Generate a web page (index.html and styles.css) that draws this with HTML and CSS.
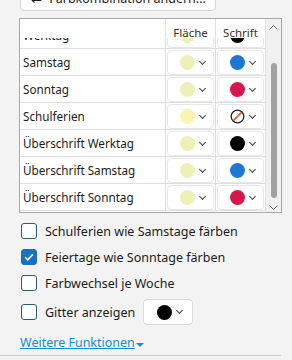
FILE: index.html
```html
<!DOCTYPE html>
<html lang="de">
<head>
    <meta charset="UTF-8">
    <title>Farben</title>
    <link rel="stylesheet" href="styles.css">
</head>
<body>

    <div class="top-btn"><span class="swap">⇄</span> Farbkombination ändern...</div>

    <!-- Farbtabelle -->
    <div class="table">
        <div class="grid-wrap">
            <div class="head">
                <div class="hcell"></div>
                <div class="hcell">Fläche</div>
                <div class="hcell">Schrift</div>
            </div>
            <div class="rows">
                <div class="row">
                    <div class="label">Werktag</div>
                    <div class="cell"><div class="pick"><span class="dot" style="background:#efefb8"></span><span class="chev"></span></div></div>
                    <div class="cell"><div class="pick"><span class="dot" style="background:#000"></span><span class="chev"></span></div></div>
                </div>
                <div class="row">
                    <div class="label">Samstag</div>
                    <div class="cell"><div class="pick"><span class="dot" style="background:#efefb8"></span><span class="chev"></span></div></div>
                    <div class="cell"><div class="pick"><span class="dot" style="background:#1f77d4"></span><span class="chev"></span></div></div>
                </div>
                <div class="row">
                    <div class="label">Sonntag</div>
                    <div class="cell"><div class="pick"><span class="dot" style="background:#efefb8"></span><span class="chev"></span></div></div>
                    <div class="cell"><div class="pick"><span class="dot" style="background:#d5174b"></span><span class="chev"></span></div></div>
                </div>
                <div class="row">
                    <div class="label">Schulferien</div>
                    <div class="cell"><div class="pick"><span class="dot" style="background:#fcf4b0"></span><span class="chev"></span></div></div>
                    <div class="cell"><div class="pick">
                        <svg class="none" width="15" height="15" viewBox="0 0 15 15">
                            <circle cx="7.5" cy="7.5" r="6.3" fill="#fff" stroke="#222" stroke-width="1.3"/>
                            <line x1="11.6" y1="3.4" x2="3.4" y2="11.6" stroke="#e0603a" stroke-width="1.8"/>
                        </svg><span class="chev"></span></div></div>
                </div>
                <div class="row">
                    <div class="label">Überschrift Werktag</div>
                    <div class="cell"><div class="pick"><span class="dot" style="background:#efefb8"></span><span class="chev"></span></div></div>
                    <div class="cell"><div class="pick"><span class="dot" style="background:#000"></span><span class="chev"></span></div></div>
                </div>
                <div class="row">
                    <div class="label">Überschrift Samstag</div>
                    <div class="cell"><div class="pick"><span class="dot" style="background:#efefb8"></span><span class="chev"></span></div></div>
                    <div class="cell"><div class="pick"><span class="dot" style="background:#1f77d4"></span><span class="chev"></span></div></div>
                </div>
                <div class="row">
                    <div class="label">Überschrift Sonntag</div>
                    <div class="cell"><div class="pick"><span class="dot" style="background:#efefb8"></span><span class="chev"></span></div></div>
                    <div class="cell"><div class="pick"><span class="dot" style="background:#d5174b"></span><span class="chev"></span></div></div>
                </div>
            </div>
        </div>
        <div class="scrollbar">
            <svg width="15" height="10" viewBox="0 0 15 10"><path d="M3.5 6.5 L7.5 2.5 L11.5 6.5" fill="none" stroke="#777" stroke-width="1"/></svg>
            <div class="track"><div class="thumb"></div></div>
            <svg width="15" height="10" viewBox="0 0 15 10"><path d="M3.5 3.5 L7.5 7.5 L11.5 3.5" fill="none" stroke="#777" stroke-width="1"/></svg>
        </div>
    </div>

    <!-- Optionen -->
    <div class="options">
        <label class="opt"><span class="box"></span>Schulferien wie Samstage färben</label>
        <label class="opt"><span class="box checked">
            <svg width="12" height="12" viewBox="0 0 12 12"><path d="M2.2 6.2 L4.8 8.8 L9.8 3.4" fill="none" stroke="#fff" stroke-width="1.6"/></svg>
        </span>Feiertage wie Sonntage färben</label>
        <label class="opt"><span class="box"></span>Farbwechsel je Woche</label>
        <div class="opt grid-opt">
            <span class="box"></span>Gitter anzeigen
            <div class="pick small"><span class="dot" style="background:#000"></span><span class="chev"></span></div>
        </div>
    </div>

    <a class="more" href="#">Weitere Funktionen</a><span class="tri"></span>

    <div class="bottom-line"></div>

</body>
</html>
```

FILE: styles.css
```css
* { margin: 0; padding: 0; box-sizing: border-box; }
body { background: #f3f3f3; font-family: "Noto Sans", "Open Sans", sans-serif; font-size: 12.5px; color: #1b1b1b; width: 292px; height: 360px; overflow: hidden; }

/* Button oben, abgeschnitten */
.top-btn {
    width: 196px;
    height: 24px;
    margin: -13px 0 0 20px;
    background: #fdfdfd;
    border: 1px solid #d6d6d6;
    border-radius: 4px;
    padding: 2px 0 0 10px;
    white-space: nowrap;
}
.top-btn .swap { margin-right: 4px; }

/* Tabelle */
.table {
    display: flex;
    width: 263px;
    height: 195px;
    margin: 7px 0 0 19px;
    border: 1px solid #a8a8a8;
    background: #fff;
    overflow: hidden;
}
.grid-wrap { position: relative; width: 246px; overflow: hidden; }

.head {
    position: absolute;
    top: 0; left: 0; right: 0;
    height: 19px;
    display: grid;
    grid-template-columns: 146px 50px 50px;
    z-index: 2;
}
.hcell { background: #fff; border-right: 1px solid #e2e2e2; text-align: center; font-size: 11.5px; color: #333; line-height: 17px; padding-top: 5px; height: 19px; }

.rows { padding-top: 3px; }
.row {
    display: grid;
    grid-template-columns: 146px 50px 50px;
    height: 27px;
    border-bottom: 1px solid #dedede;
}
.label { padding-left: 3px; line-height: 27px; font-size: 11.7px; border-right: 1px solid #dedede; white-space: nowrap; }
.cell { border-right: 1px solid #dedede; padding: 1px; }

.pick {
    display: flex;
    align-items: center;
    justify-content: center;
    gap: 2px;
    height: 100%;
    padding-left: 3px;
    background: #fff;
    border: 1px solid #e6e6e6;
    border-radius: 4px;
}
.dot { width: 15px; height: 15px; border-radius: 50%; display: block; }
.none { display: block; }
.chev {
    width: 5px; height: 5px;
    border-right: 1px solid #444;
    border-bottom: 1px solid #444;
    transform: rotate(45deg);
    margin: -3px 0 0 3px;
}

.scrollbar { width: 15px; background: #f0f0f0; display: flex; flex-direction: column; padding-top: 4px; }
.track { flex: 1; display: flex; justify-content: center; padding: 30px 0 4px; }
.thumb { width: 6px; background: #a2a2a2; border-radius: 3px; margin-left: 1px; }
.scrollbar svg { display: block; }

/* Optionen */
.options { margin: 5px 0 0 21px; display: flex; flex-direction: column; }
.opt { display: flex; align-items: center; height: 26px; white-space: nowrap; }
.box {
    width: 16px; height: 16px;
    border: 1px solid #2a5d78;
    border-radius: 3px;
    background: #fff;
    margin-right: 8px;
    display: flex; align-items: center; justify-content: center;
}
.box.checked { background: #1a6fc2; border-color: #1a6fc2; }
.grid-opt { height: 30px; padding-top: 2px; }
.pick.small { width: 50px; height: 26px; margin-left: 8px; border-color: #dadada; }

.more {
    display: inline-block;
    margin: 8px 0 0 20px;
    color: #1c8ccf;
    text-decoration: underline;
    font-size: 12.5px;
}
.tri {
    display: inline-block;
    width: 0; height: 0;
    border-left: 4px solid transparent;
    border-right: 4px solid transparent;
    border-top: 4px solid #1c8ccf;
    margin-left: 1px;
}
.bottom-line { width: 281px; height: 1px; background: #cfcfcf; margin-top: 4px; }
```
